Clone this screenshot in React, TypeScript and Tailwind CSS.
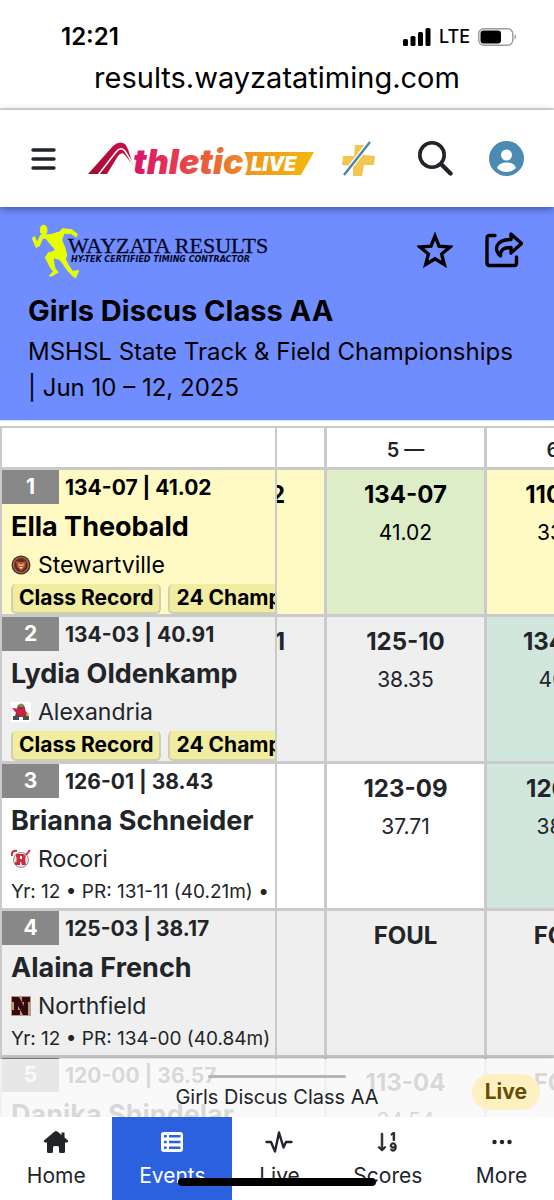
import React from "react";
import { BsSortNumericDown, BsThreeDots } from "react-icons/bs";

type Mark = [string, string?];

interface Athlete {
  rank: number;
  best: string;
  name: string;
  school: string;
  tags?: string[];
  details?: string;
  prev: string;
  five: Mark;
  six: Mark;
  row: string;
  fiveBg: string;
  sixBg: string;
}

const athletes: Athlete[] = [
  { rank: 1, best: "134-07 | 41.02", name: "Ella Theobald", school: "Stewartville", tags: ["Class Record", "24 Champ"], prev: "2", five: ["134-07", "41.02"], six: ["110-00", "33.53"], row: "bg-[#fff9c4] text-black", fiveBg: "bg-[#dcedc8]", sixBg: "" },
  { rank: 2, best: "134-03 | 40.91", name: "Lydia Oldenkamp", school: "Alexandria", tags: ["Class Record", "24 Champ"], prev: "1", five: ["125-10", "38.35"], six: ["134-03", "40.91"], row: "bg-[#efefef]", fiveBg: "", sixBg: "bg-[#d1e7dd]" },
  { rank: 3, best: "126-01 | 38.43", name: "Brianna Schneider", school: "Rocori", details: "Yr: 12 • PR: 131-11 (40.21m) •", prev: "", five: ["123-09", "37.71"], six: ["126-01", "38.43"], row: "bg-white", fiveBg: "", sixBg: "bg-[#d1e7dd]" },
  { rank: 4, best: "125-03 | 38.17", name: "Alaina French", school: "Northfield", details: "Yr: 12 • PR: 134-00 (40.84m)", prev: "", five: ["FOUL"], six: ["FOUL"], row: "bg-[#efefef]", fiveBg: "", sixBg: "" },
  { rank: 5, best: "120-00 | 36.57", name: "Danika Shindelar", school: "", prev: "", five: ["113-04", "34.54"], six: ["FOUL"], row: "bg-white", fiveBg: "", sixBg: "" },
];

function StatusBar() {
  return (
    <div className="border-b-2 border-[#dedee0] bg-white pt-6 text-black">
      <div className="flex items-center justify-between pr-[37px] pl-[61px]">
        <span className="text-[24px] leading-[26px] font-semibold">12:21</span>
        <div className="flex items-center gap-2">
          <svg className="h-[18px] w-7" viewBox="0 0 28 18" aria-label="Signal">
            <rect x="0" y="11" width="5" height="7" rx="1.5" />
            <rect x="7.5" y="8" width="5" height="10" rx="1.5" />
            <rect x="15" y="4" width="5" height="14" rx="1.5" />
            <rect x="22.5" y="0" width="5" height="18" rx="1.5" />
          </svg>
          <span className="text-[18px] leading-[26px] font-medium">LTE</span>
          <svg className="h-[18px] w-[39px]" viewBox="0 0 39 18" aria-label="Battery">
            <rect x="0.75" y="0.75" width="34" height="16.5" rx="5" fill="none" stroke="#9b9b9b" strokeWidth="1.4" />
            <rect x="2.5" y="2.5" width="20.5" height="13" rx="3" />
            <path d="M36.5 6.5c2 .6 2 4.400 0 5z" fill="#9b9b9b" />
          </svg>
        </div>
      </div>
      <p className="pt-2 pb-[10px] text-center text-[29px] leading-10">results.wayzatatiming.com</p>
    </div>
  );
}

function AthleticLogo() {
  return (
    <svg className="h-9 w-[227px]" viewBox="0 0 227 36" role="img" aria-label="AthleticLIVE">
      <defs>
        <linearGradient id="word" gradientUnits="userSpaceOnUse" x1="46" y1="0" x2="160" y2="0">
          <stop offset="0" stopColor="#d9146c" />
          <stop offset="0.35" stopColor="#e6364f" />
          <stop offset="0.75" stopColor="#ea6f35" />
          <stop offset="1" stopColor="#ee9322" />
        </linearGradient>
        <linearGradient id="peak" x1="0" y1="1" x2="1" y2="0">
          <stop offset="0" stopColor="#a30d2f" />
          <stop offset="1" stopColor="#c90f4a" />
        </linearGradient>
        <linearGradient id="tag" x1="0" y1="0" x2="1" y2="0">
          <stop offset="0" stopColor="#ee9420" />
          <stop offset="1" stopColor="#f2b90c" />
        </linearGradient>
      </defs>
      <path d="M0 33L25 5Q31-1 37 3Q40 6 45 24L36 13Q33 11 30 15L19 33Z" fill="url(#peak)" />
      <path d="M10.500 33.500L28 11Q33 5 37 10L45 23" fill="none" stroke="#fff" strokeWidth="1.500" />
      <text x="45" y="33" fontFamily="Inter, sans-serif" fontSize="34" fontWeight="900" fontStyle="italic" fill="url(#word)">thletic</text>
      <path d="M156 11H226L213 34H157Q163 22 156 11Z" fill="url(#tag)" />
      <text x="163" y="30" fontFamily="Inter, sans-serif" fontSize="20" fontWeight="900" fontStyle="italic" fill="#fff">LIVE</text>
    </svg>
  );
}

function Header() {
  return (
    <header className="relative z-20 flex h-[97px] items-center bg-white pr-[30px] pl-[31px] shadow-[0_2px_8px_rgba(0,0,0,0.4)]">
      <button type="button" aria-label="Menu" className="mr-8">
        <svg className="h-6 w-[25px]" viewBox="0 0 25 24" stroke="#212529" strokeWidth="3.4" strokeLinecap="round">
          <path d="M2 3H23M2 12H23M2 21H23" />
        </svg>
      </button>
      <a href="#home" aria-label="AthleticLIVE"><AthleticLogo /></a>
      <div className="flex flex-1 items-center justify-between pl-[26px]">
        <button type="button" aria-label="Plus">
          <svg className="h-9 w-9" viewBox="0 0 36 36">
            <path d="M14 4H23V14L34 15L33 24H23L21 35H12V25L1 24L2 15H13Z" fill="#f3c64f" />
            <path d="M3 34L29 1" stroke="#fff" strokeWidth="5" />
            <path d="M3 34L29 1" stroke="#4a86ab" strokeWidth="2.4" />
          </svg>
        </button>
        <button type="button" aria-label="Search" className="pl-1">
          <svg className="size-[35px]" viewBox="0 0 35 35" fill="none" stroke="#212529" strokeLinecap="round">
            <circle cx="14" cy="14" r="12.200" strokeWidth="3.600" />
            <path d="M23.500 23.500L32.500 32.500" strokeWidth="4.400" />
          </svg>
        </button>
        <button type="button" aria-label="Account">
          <svg className="size-[35px]" viewBox="0 0 35 35">
            <circle cx="17.5" cy="17.5" r="17.5" fill="#4b8bb3" />
            <circle cx="17.5" cy="14" r="5.500" fill="#fff" />
            <path d="M8 27Q10 21.500 17.500 21.500T27 27Q23 31 17.500 31T8 27Z" fill="#fff" />
          </svg>
        </button>
      </div>
    </header>
  );
}

function WayzataLogo() {
  return (
    <svg className="h-[56px] w-[244px]" viewBox="0 0 244 56" role="img" aria-label="Wayzata Results">
      <g fill="#e6ff00" stroke="#e6ff00" strokeWidth="3" strokeLinejoin="round" transform="translate(-28 -13) scale(0.3333)">
        <ellipse cx="131" cy="60" rx="10" ry="14" />
        <path d="M140 74L152 74L178 66L188 56L215 59L232 72L229 81L212 70L192 70L185 90L195 115L200 135L196 148L205 165L217 184L236 182L227 203L218 198L203 182L188 160L178 148L160 143L161 155L165 175L175 187L155 198L148 198L160 184L150 170L136 142L145 128L160 125L165 118L148 98L138 85L128 84L118 108L108 112L97 84L104 80L111 98L122 76Z" />
      </g>
      <text x="40" y="30" fontFamily="'Liberation Serif', serif" fontSize="22" fill="#05071c" stroke="#05071c" strokeWidth="0.300">WAYZATA RESULTS</text>
      <text x="43" y="39" fontFamily="'DejaVu Sans', sans-serif" fontSize="8" fontWeight="700" fontStyle="italic" fill="#05071c">HY-TEK CERTIFIED TIMING CONTRACTOR</text>
    </svg>
  );
}

function Banner() {
  return (
    <section className="border-b border-[#cfdcff] bg-[#6f8dff] px-7 pt-4 pb-[14px] text-black">
      <div className="flex items-start justify-between pr-[3px]">
        <WayzataLogo />
        <div className="flex gap-8 pt-[9px]">
          <button type="button" aria-label="Favorite">
            <svg className="size-9" viewBox="0 0 36 36" fill="none" stroke="#000" strokeWidth="3.400">
              <path d="M18 4L22 14.200L33 15L24.600 22L27.300 32.500L18 26.800L8.700 32.500L11.400 22L3 15L14 14.200Z" />
            </svg>
          </button>
          <button type="button" aria-label="Share">
            <svg className="h-9 w-[38px]" viewBox="0 0 38 36" fill="none" stroke="#000" strokeWidth="3.400" strokeLinejoin="round" strokeLinecap="round">
              <path d="M10 3.500H4.500Q2 3.500 2 6V31Q2 33.500 4.500 33.500H29Q31.500 33.500 31.500 31V25" />
              <path d="M26 2L36.500 11.500L26 21V15.500C19 15.500 15.500 17 15.500 24C9 19 9.500 7.500 26 7.500Z" />
            </svg>
          </button>
        </div>
      </div>
      <h1 className="mt-[13px] text-[29px] leading-[38px] font-bold">Girls Discus Class AA</h1>
      <p className="mt-1 text-[24px] leading-9">MSHSL State Track &amp; Field Championships | Jun 10 – 12, 2025</p>
    </section>
  );
}

function SchoolLogo({ rank }: { rank: number }) {
  return (
    <svg className="size-5 shrink-0" viewBox="0 0 20 20" aria-hidden="true">
      {rank === 1 && (
        <>
          <circle cx="10" cy="10" r="9.500" fill="#5b2a2a" />
          <circle cx="10" cy="10" r="7.500" fill="none" stroke="#a8763e" strokeWidth="1.200" />
          <path d="M5 6L8 7H12L15 6L14 12L10 16L6 12Z" fill="#b5523c" />
          <path d="M7 8L10 10L13 8L12 11H8Z" fill="#f2c14c" />
          <path d="M8 12H12L10 14Z" fill="#f4e9dc" />
        </>
      )}
      {rank === 2 && (
        <>
          <rect width="20" height="20" fill="#fff" />
          <path d="M7 3H13L16 14H18V18H12V15H8V18H2V14H4Z" fill="#4c4c55" />
          <path d="M1 6L10 7L13 4L14 9L18 12L14 12L11 15L6 12Z" fill="#d4203c" />
          <path d="M7 3Q10 0 13 3L12 5H8Z" fill="#8a8a3b" />
          <circle cx="16.500" cy="12.500" r="1.500" fill="#e8b03b" />
        </>
      )}
      {rank === 3 && (
        <>
          <circle cx="10" cy="11" r="7.500" fill="#e9e4e2" stroke="#777" strokeWidth="0.800" />
          <path d="M1 7Q0 1 6 2M15 6L19 1" fill="none" stroke="#c9283f" strokeWidth="2" />
          <path d="M5 5H12Q16 6 14 10L15 16H11L10 13H9V16H4V13H5.500V8H5Z" fill="#cf2c43" />
          <path d="M9 7H11V10H9Z" fill="#fff" />
        </>
      )}
      {rank === 4 && (
        <>
          <rect width="20" height="20" fill="#b99c7e" />
          <path d="M1 1H8L13 10V6H11V1H19V6H17V19H12L7 10V14H9V19H1V14H3V6H1Z" fill="#35090f" />
        </>
      )}
    </svg>
  );
}

function MarkCell({ mark, bg }: { mark: Mark; bg: string }) {
  return (
    <td className={`border-r-[3px] border-b-[3px] border-[#cacaca] p-0 pt-[9px] text-center align-top ${bg}`}>
      <div className="text-[24px] leading-8 font-bold">{mark[0]}</div>
      {mark[1] && <div className="mt-2 text-[21px] leading-7">{mark[1]}</div>}
    </td>
  );
}

function Results() {
  return (
    <table className="mt-[5px] w-[647px] table-fixed border-separate border-spacing-0 border-t-2 border-[#cfcac6]">
      <colgroup>
        <col className="w-[277px]" />
        <col className="w-[50px]" />
        <col className="w-[160px]" />
        <col className="w-[160px]" />
      </colgroup>
      <thead>
        <tr className="h-[42px] text-[20px] leading-7">
          <th aria-label="Athlete" className="border-x-2 border-b-[3px] border-[#cacaca] p-0" />
          <th aria-label="Attempt 4" className="border-r-[3px] border-b-[3px] border-[#cacaca] p-0" />
          <th className="border-r-[3px] border-b-[3px] border-[#cacaca] p-0 pt-1 font-semibold">5 —</th>
          <th className="border-r-[3px] border-b-[3px] border-[#cacaca] p-0 pt-1 font-semibold">6 —</th>
        </tr>
      </thead>
      <tbody>
        {athletes.map((a) => (
          <tr key={a.rank} className={`h-[147px] ${a.row}`}>
            <td className="overflow-hidden border-x-2 border-b-[3px] border-[#cacaca] p-0 align-top whitespace-nowrap">
              <div className="flex items-start gap-[6px] text-[21px] font-bold">
                <span className="w-[57px] bg-[#888] text-center leading-[34px] text-white">{a.rank}</span>
                <span className="leading-9">{a.best}</span>
              </div>
              <div className="pl-[9px]">
                <div className="text-[27px] leading-[42px] font-bold">{a.name}</div>
                <div className="flex items-center gap-[7px] text-[23px] leading-[34px]">
                  <SchoolLogo rank={a.rank} />
                  {a.school}
                </div>
                {a.tags && (
                  <div className="mt-[2px] flex gap-[7px]">
                    {a.tags.map((t) => (
                      <span key={t} className="rounded-[5px] border-2 border-t-0 border-[#d2ceb0] bg-[#f0eca0] px-[6px] text-[21px] leading-7 font-bold text-black">{t}</span>
                    ))}
                  </div>
                )}
                {a.details && <div className="text-[19px] leading-8">{a.details}</div>}
              </div>
            </td>
            <td className="overflow-hidden border-r-[3px] border-b-[3px] border-[#cacaca] p-0 pt-[9px] align-top text-[24px] leading-8 font-bold">
              <div className="flex w-2 justify-end">{a.prev}</div>
            </td>
            <MarkCell mark={a.five} bg={a.fiveBg} />
            <MarkCell mark={a.six} bg={a.sixBg} />
          </tr>
        ))}
      </tbody>
    </table>
  );
}

function EventSheet() {
  return (
    <div className="absolute inset-x-0 bottom-0 flex h-[58px] flex-col items-center bg-[#f8f8f8]/85 pt-4 shadow-[0_0_6px_rgba(0,0,0,0.25)]">
      <div className="h-[3px] w-[138px] rounded-full bg-[#b5b5b7]" />
      <div className="pt-1 text-[20px] leading-[30px]">Girls Discus Class AA</div>
      <span className="absolute top-[15px] right-[14px] rounded-full bg-[#fff0c2] px-[13px] text-[21px] leading-9 font-bold text-[#664d03]">Live</span>
    </div>
  );
}

function HomeIcon() {
  return (
    <svg className="h-6 w-[26px]" viewBox="0 0 26 24" fill="currentColor" aria-hidden="true">
      <path d="M11.600 1.600Q13 .4 14.400 1.600L25 10.600Q26 12.300 24 12.600H22V21.500Q22 23 20.500 23H17.500Q16 23 16 21.500V17.500Q16 16 14.500 16H11.500Q10 16 10 17.500V21.500Q10 23 8.500 23H5.500Q4 23 4 21.500V12.600H2Q0 12.300 1 10.600Z" />
      <path d="M18.500 2.500H21.500V8L18.500 5.500Z" />
    </svg>
  );
}

function EventsIcon() {
  return (
    <svg className="h-6 w-[26px]" viewBox="0 0 26 24" fill="currentColor" fillRule="evenodd" aria-hidden="true">
      <path d="M5 2H21Q24 2 24 5V19Q24 22 21 22H5Q2 22 2 19V5Q2 2 5 2ZM5 5V7.500H7.700V5ZM10 5V7.500H21.500V5ZM5 10.800V13.300H7.700V10.800ZM10 10.800V13.300H21.500V10.800ZM5 16.500V19H7.700V16.500ZM10 16.500V19H21.500V16.500Z" />
    </svg>
  );
}

function LiveIcon() {
  return (
    <svg className="h-6 w-7" viewBox="0 0 28 24" fill="none" stroke="currentColor" strokeWidth="2.400" strokeLinecap="round" strokeLinejoin="round" aria-hidden="true">
      <path d="M1.500 12H6L10 21.500L14 2.500L18.500 17.500L21 12H26.500" />
    </svg>
  );
}

function ScoresIcon() {
  return <BsSortNumericDown className="size-6 stroke-current stroke-[0.6]" aria-hidden="true" />;
}

function MoreIcon() {
  return <BsThreeDots className="size-6" aria-hidden="true" />;
}

const tabs = [
  { label: "Home", icon: HomeIcon, active: false },
  { label: "Events", icon: EventsIcon, active: true },
  { label: "Live", icon: LiveIcon, active: false },
  { label: "Scores", icon: ScoresIcon, active: false },
  { label: "More", icon: MoreIcon, active: false },
];

function TabBar() {
  return (
    <nav className="relative z-10 flex h-[83px] bg-white">
      {tabs.map(({ label, icon: Icon, active }) => (
        <a key={label} href={`#${label.toLowerCase()}`} className={`flex flex-auto flex-col items-center pt-[13px] ${active ? "bg-[#2b60df] text-white" : ""}`}>
          <Icon />
          <span className="pt-2 text-[21px] leading-7">{label}</span>
        </a>
      ))}
      <div className="absolute bottom-[14px] left-1/2 h-2 w-[198px] -translate-x-1/2 rounded-full bg-black" />
    </nav>
  );
}

export default function App() {
  return (
    <div className="flex h-screen flex-col overflow-hidden bg-white font-['Inter',sans-serif] text-[#212529]">
      <StatusBar />
      <Header />
      <Banner />
      <main className="relative min-h-0 flex-1 overflow-hidden">
        <Results />
        <EventSheet />
      </main>
      <TabBar />
    </div>
  );
}
